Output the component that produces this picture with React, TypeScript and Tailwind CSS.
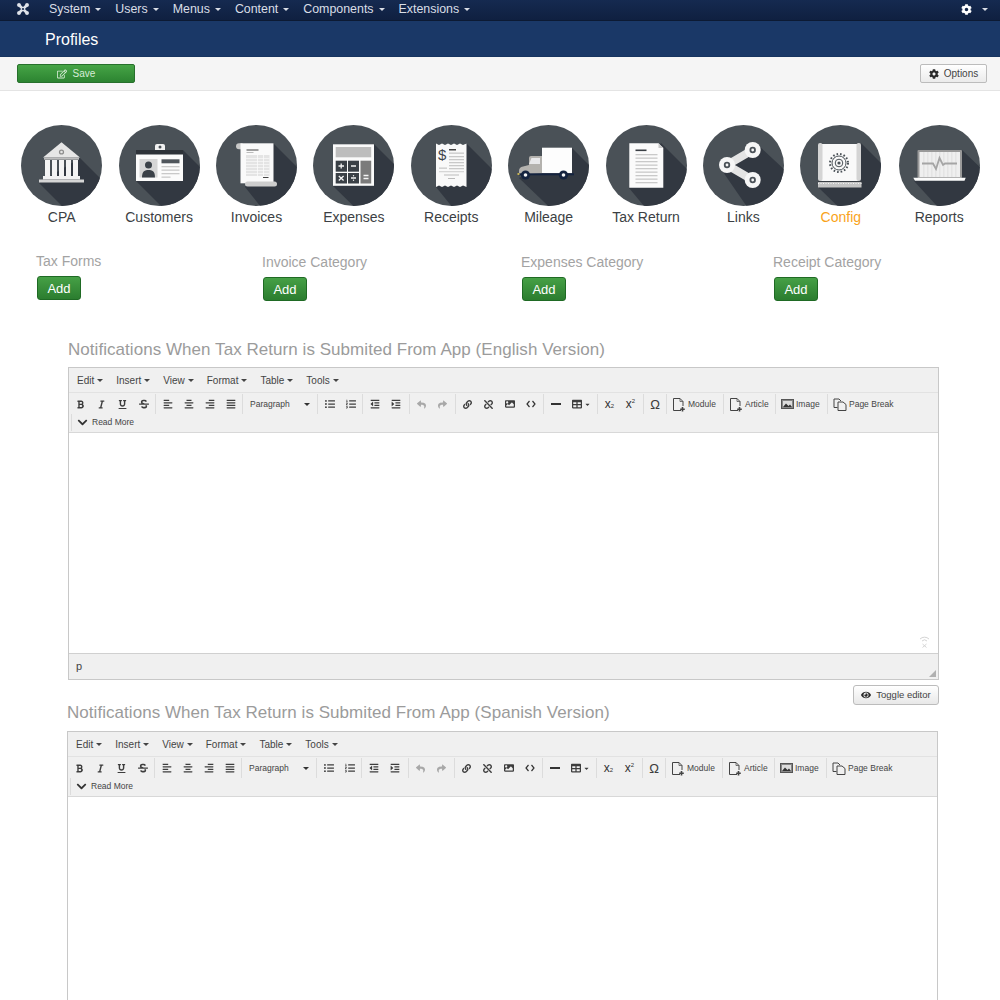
import React from "react";
import {
  FaAlignCenter,
  FaAlignJustify,
  FaAlignLeft,
  FaAlignRight,
  FaBold,
  FaCaretDown,
  FaChevronDown,
  FaCog,
  FaEye,
  FaImage,
  FaIndent,
  FaItalic,
  FaLink,
  FaListOl,
  FaListUl,
  FaOutdent,
  FaRegEdit,
  FaReply,
  FaShare,
  FaStrikethrough,
  FaTable,
  FaUnderline,
  FaUnlink,
} from "react-icons/fa";

const FONT = "font-['Liberation_Sans',Arial,sans-serif]";
const NAV = ["System", "Users", "Menus", "Content", "Components", "Extensions"];

const Caret = ({ className = "" }: { className?: string }) => (
  <span className={`inline-block h-0 w-0 border-x-[3px] border-t-[3px] border-x-transparent border-t-current ${className}`} />
);

const JoomlaLogo = () => (
  <svg width="14" height="14" viewBox="0 0 14 14" fill="none" stroke="#dfe3ea">
    <path d="M3.5 3.5 L10.5 10.5 M10.5 3.5 L3.5 10.5" strokeWidth="2.6" />
    <circle cx="3" cy="3" r="1.7" fill="#dfe3ea" strokeWidth="0.6" />
    <circle cx="11" cy="3" r="1.7" fill="#dfe3ea" strokeWidth="0.6" />
    <circle cx="3" cy="11" r="1.7" fill="#dfe3ea" strokeWidth="0.6" />
    <circle cx="11" cy="11" r="1.7" fill="#dfe3ea" strokeWidth="0.6" />
    <circle cx="7" cy="7" r="1.1" fill="#14284c" stroke="none" />
  </svg>
);

// Dark disc with a long shadow falling to the lower right
const Disc = ({ id, shadow, children }: { id: string; shadow: string; children: React.ReactNode }) => (
  <svg width="81" height="81" viewBox="0 0 81 81">
    <circle cx="40.5" cy="40.5" r="40.5" fill="#4a5157" />
    <clipPath id={id}>
      <circle cx="40.5" cy="40.5" r="40.5" />
    </clipPath>
    <polygon points={shadow} fill="#323841" clipPath={`url(#${id})`} />
    {children}
  </svg>
);

const Lines = ({ x, w, ys, color = "#c9c9c9" }: { x: number; w: number; ys: number[]; color?: string }) => (
  <>
    {ys.map((y) => (
      <rect key={y} x={x} y={y} width={w} height="1.3" fill={color} />
    ))}
  </>
);

const CpaIcon = () => (
  <Disc id="cpa" shadow="59,33 100,74 60,100 18,58">
    <polygon points="40.5,17.3 59,32.5 22,32.5" fill="#e6e6e6" />
    <circle cx="40.5" cy="27" r="2.6" fill="#8d8d8d" />
    <circle cx="40.5" cy="27" r="1.3" fill="#e6e6e6" />
    {[24, 31, 38, 45, 52].map((x) => (
      <rect key={x} x={x} y="35" width="5" height="16" fill="#f4f4f4" />
    ))}
    <rect x="23" y="32.5" width="35" height="2.2" fill="#bdbdbd" />
    <rect x="22" y="51" width="37" height="3.5" fill="#f2f2f2" />
    <rect x="18" y="54.5" width="45" height="3" fill="#d5d5d5" />
  </Disc>
);

const CustomersIcon = () => (
  <Disc id="customers" shadow="64,25 110,71 62,101 17,56">
    <rect x="36" y="19" width="10" height="8" rx="2" fill="#f2f2f2" />
    <circle cx="41" cy="22" r="1.5" fill="#4a5157" />
    <rect x="17" y="25" width="47" height="5" fill="#2d3238" />
    <rect x="17" y="29.5" width="47" height="26.5" fill="#fbfbfb" />
    <rect x="20.5" y="34" width="18" height="18.5" fill="#d6d6d6" />
    <circle cx="29.5" cy="40" r="3.5" fill="#3b4148" />
    <path d="M23 52.5 C23 46 26 45 29.5 45 C33 45 36 46 36 52.5 Z" fill="#3b4148" />
    <rect x="42.5" y="34.3" width="18" height="4" fill="#50565c" />
    <Lines x={42.5} w={18} ys={[41, 44.5, 48]} />
    <rect x="42.5" y="51.5" width="9" height="1.3" fill="#c9c9c9" />
  </Disc>
);

const InvoicesIcon = () => (
  <Disc id="invoices" shadow="57,18 100,61 60,101 29,62">
    <rect x="20" y="18.3" width="8" height="6" rx="3" fill="#c8c8c8" />
    <rect x="24.5" y="18.3" width="33" height="40" fill="#fafafa" />
    <rect x="29" y="56.5" width="32" height="5" rx="2.5" fill="#cdcdcd" />
    <rect x="30.5" y="24.5" width="12" height="1" fill="#444" />
    <rect x="30.5" y="27" width="7" height="1" fill="#bbb" />
    <rect x="30" y="30" width="23.5" height="21" fill="#e4e4e4" />
    {[33, 36, 39, 42, 45, 48].map((y) => (
      <rect key={y} x="30" y={y} width="23.5" height="0.7" fill="#fafafa" />
    ))}
    <rect x="41" y="30" width="0.8" height="21" fill="#fafafa" />
    <rect x="47" y="30" width="0.8" height="21" fill="#fafafa" />
    <rect x="47" y="52" width="5.5" height="1" fill="#444" />
  </Disc>
);

const ExpensesIcon = () => (
  <Disc id="expenses" shadow="61,19 105,63 64,104 20,61">
    <rect x="20" y="19.3" width="41" height="41.5" fill="#fafafa" />
    <rect x="22.7" y="22" width="35.5" height="10.3" fill="#bdbdbd" />
    <rect x="22.7" y="35.7" width="11.3" height="11" fill="#3a4046" />
    <rect x="35" y="35.7" width="11" height="11" fill="#3a4046" />
    <rect x="22.7" y="48" width="11.3" height="10.5" fill="#3a4046" />
    <rect x="35" y="48" width="11" height="10.5" fill="#3a4046" />
    <rect x="47.5" y="35.7" width="10.7" height="22.8" fill="#7b7b7b" />
    <path d="M25.5 41h5.5M28.2 38.5v5M38 41h5M25.8 51l4.8 4.5M30.6 51l-4.8 4.5M38 53h5M50.5 50.5h5M50.5 53.5h5" stroke="#f4f4f4" strokeWidth="1.3" />
    <circle cx="40.5" cy="50.7" r="0.7" fill="#f4f4f4" />
    <circle cx="40.5" cy="55.3" r="0.7" fill="#f4f4f4" />
  </Disc>
);

const ReceiptsIcon = () => (
  <Disc id="receipts" shadow="55,18 100,63 60,105 25,62">
    <polygon
      points="25,18.5 28,20 31,18.5 34,20 37,18.5 40,20 43,18.5 46,20 49,18.5 52,20 55.5,18.5 55.5,62 52,60.5 49,62 46,60.5 43,62 40,60.5 37,62 34,60.5 31,62 28,60.5 25,62"
      fill="#f9f9f9"
    />
    <text x="27" y="35" fontSize="15" fontFamily="Liberation Sans" fill="#3f454b">$</text>
    <rect x="38" y="24" width="7" height="1.5" fill="#444" />
    <Lines x={38} w={15} ys={[27.5, 31, 34, 37, 40]} />
    <Lines x={28} w={8} ys={[42.5]} />
    <Lines x={38} w={15} ys={[43]} />
    <Lines x={28} w={25} ys={[46]} color="#d6d6d6" />
    <rect x="33" y="49.5" width="15" height="1" fill="#bbb" />
    <rect x="37" y="53" width="7" height="1" fill="#bbb" />
  </Disc>
);

const MileageIcon = () => (
  <Disc id="mileage" shadow="64,23 110,69 60,100 11,53">
    <rect x="34" y="22.7" width="30" height="25.5" fill="#fdfdfd" />
    <path d="M21 48.3 V33 Q21 31 23 31 H34 V48.3 Z" fill="#b4b2ae" />
    <polygon points="23.5,33 32,33 32,39 21,39" fill="#e8e8ea" />
    <path d="M11 50 V46 Q11 42 15 41.5 L21 40 H34 V48.3 Z" fill="#b4b2ae" />
    <rect x="11" y="48.3" width="55" height="2" fill="#14233f" />
    <circle cx="17.5" cy="50" r="4.6" fill="#14233f" />
    <circle cx="17.5" cy="50" r="1.8" fill="#f4f4f4" />
    <circle cx="55.5" cy="50" r="4.6" fill="#14233f" />
    <circle cx="55.5" cy="50" r="1.8" fill="#f4f4f4" />
    <rect x="9.5" y="48" width="2" height="2" fill="#c8b452" />
  </Disc>
);

const TaxReturnIcon = () => (
  <Disc id="taxreturn" shadow="55,18 100,63 58,105 23,63">
    <polygon points="23.3,18.3 52.5,18.3 57.3,23 57.3,62.7 23.3,62.7" fill="#fbfbfb" />
    <polygon points="52.5,18.3 57.3,23 52.5,23" fill="#c8c8c8" />
    <rect x="29.5" y="24.5" width="11" height="1.6" fill="#3a3f45" />
    <Lines x={29.5} w={22} ys={[29, 32.5, 36, 39.5, 43, 46.5, 50, 53.5, 57]} />
  </Disc>
);

const LinksIcon = () => (
  <Disc id="links" shadow="55,20 100,62 60,105 18,44">
    <path d="M24 40 L49.7 25 M24 40 L49.7 55" stroke="#e4e4e4" strokeWidth="8" />
    {[[24, 40], [49.7, 25], [49.7, 55]].map(([x, y]) => (
      <g key={x + y}>
        <circle cx={x} cy={y} r="8" fill="#f6f6f6" />
        <circle cx={x} cy={y} r="3.2" fill="#4a5157" />
        <circle cx={x} cy={y} r="1.4" fill="#f6f6f6" />
      </g>
    ))}
  </Disc>
);

const ConfigIcon = () => (
  <Disc id="config" shadow="61,18 105,62 62,105 18,62">
    <rect x="21" y="19" width="37" height="37" fill="#f9f9f9" />
    <rect x="18" y="18" width="4.5" height="38" rx="2" fill="#d4d4d4" />
    <rect x="56.5" y="18" width="4.5" height="38" rx="2" fill="#d4d4d4" />
    <rect x="18" y="56" width="43.5" height="2.5" fill="#3a3f45" />
    <rect x="18" y="57" width="43.5" height="5.5" fill="#c4c4c4" />
    <path d="M18 58.5h43.5" stroke="#f4f4f4" strokeWidth="1" strokeDasharray="1 1.5" />
    <circle cx="39" cy="38" r="7" fill="none" stroke="#4a5157" strokeWidth="1" />
    <circle cx="39" cy="38" r="9" fill="none" stroke="#4a5157" strokeWidth="2" strokeDasharray="1.6 2" />
    <circle cx="39" cy="38" r="3.8" fill="none" stroke="#4a5157" strokeWidth="1" />
    <circle cx="39" cy="38" r="1.6" fill="#4a5157" />
  </Disc>
);

const ReportsIcon = () => (
  <Disc id="reports" shadow="63,25 105,65 60,105 15,56">
    <rect x="18.5" y="25" width="44.5" height="28" rx="1" fill="#9a9a9a" />
    <rect x="20.5" y="27" width="40.5" height="25" fill="#efefef" />
    {[24, 28, 32, 36, 40, 44, 48, 52, 56].map((x) => (
      <rect key={x} x={x} y="27" width="1.5" height="25" fill="#e4e4e4" />
    ))}
    <path d="M23 38.5 H34 L37 44 L40.5 33 L44 40 L46 38.5 H58" fill="none" stroke="#a5a5a5" strokeWidth="1.8" />
    <polygon points="14.3,52.7 66.7,52.7 65.5,55.7 16,55.7" fill="#fcfcfc" />
  </Disc>
);

const TILES = [
  { label: "CPA", icon: <CpaIcon /> },
  { label: "Customers", icon: <CustomersIcon /> },
  { label: "Invoices", icon: <InvoicesIcon /> },
  { label: "Expenses", icon: <ExpensesIcon /> },
  { label: "Receipts", icon: <ReceiptsIcon /> },
  { label: "Mileage", icon: <MileageIcon /> },
  { label: "Tax Return", icon: <TaxReturnIcon /> },
  { label: "Links", icon: <LinksIcon /> },
  { label: "Config", icon: <ConfigIcon /> },
  { label: "Reports", icon: <ReportsIcon /> },
];

const AddColumn = ({ label, className }: { label: string; className: string }) => (
  <div className={`flex flex-col items-start ${className}`}>
    <span className="h-4 text-sm leading-4 text-[#a3a3a3]">{label}</span>
    <button className="ml-px mt-[7px] h-6 w-11 rounded-[3px] border border-[#1f6a24] bg-gradient-to-b from-[#46a046] to-[#2b7d2f] text-[13px] leading-none text-white">
      Add
    </button>
  </div>
);

const DocPlusIcon = () => (
  <svg width="14" height="15" viewBox="0 0 14 15" fill="none" stroke="#444" strokeWidth="1">
    <path d="M9 13.5 H1.5 V1.5 H8 L11 4.5 V9" />
    <path d="M8 1.5 V4.5 H11" strokeWidth="0.7" />
    <path d="M10.5 10 V14.5 M8.2 12.2 H12.8" strokeWidth="1.6" />
  </svg>
);

const PicIcon = () => (
  <svg width="13" height="10" viewBox="0 0 13 10">
    <rect x="0.5" y="0.5" width="12" height="9" fill="#888" stroke="#555" />
    <rect x="2" y="2" width="9" height="6" fill="#ddd" />
    <path d="M2 8 L5 4.5 L7.5 7 L9 5.5 L11 8 Z" fill="#333" />
  </svg>
);

const PagesIcon = () => (
  <svg width="14" height="13" viewBox="0 0 14 13" fill="none" stroke="#444" strokeWidth="1">
    <path d="M4.5 9.5 H1 V1 H6 L8 3" />
    <path d="M5 4 H10 L13 6.5 V12.5 H5 Z" />
  </svg>
);

const CodeIcon = () => (
  <svg width="10" height="8" viewBox="0 0 10 8" fill="none" stroke="#333" strokeWidth="1.2">
    <path d="M3.5 1 L1 4 L3.5 7 M6.5 1 L9 4 L6.5 7" />
  </svg>
);

const Script = ({ digit, up = false }: { digit: string; up?: boolean }) => (
  <span className="flex items-baseline text-[12px] leading-none text-[#333]">
    x
    <span className={`text-[6px] leading-none ${up ? "-translate-y-[5px]" : ""}`}>{digit}</span>
  </span>
);

const Btn = ({ children, w = "w-[21px]" }: { children: React.ReactNode; w?: string }) => (
  <span className={`flex h-[20px] items-center justify-center text-[#3d3d3d] ${w}`}>{children}</span>
);

const Group = ({ children, first = false, ml = "ml-px" }: { children: React.ReactNode; first?: boolean; ml?: string }) => (
  <div className={`flex h-[20px] items-center ${first ? "pl-px" : `${ml} border-l border-[#dcdcdc] pl-px`}`}>{children}</div>
);

const TextBtn = ({ icon, label, className }: { icon: React.ReactNode; label: string; className: string }) => (
  <span className={`flex h-[20px] items-center gap-[2px] pl-[4px] text-[8.5px] text-[#444] ${className}`}>
    {icon}
    {label}
  </span>
);

const Editor = ({ className, cropped = false }: { className: string; cropped?: boolean }) => (
  <div className={`w-[871px] border border-[#c8c8c8] bg-white ${className}`}>
    <div className="flex h-[25px] items-center gap-[13px] border-b border-[#e2e2e2] bg-[#f0f0f0] pl-2 text-[10px] text-[#444]">
      {["Edit", "Insert", "View", "Format", "Table", "Tools"].map((m) => (
        <span key={m} className="flex items-center gap-[3px]">
          {m}
          <Caret />
        </span>
      ))}
    </div>
    <div className="h-10 border-b border-[#d8d8d8] bg-[#f0f0f0]">
      <div className="flex h-[21px] items-center pt-px">
        <Group first>
          <Btn><FaBold size={9} /></Btn>
          <Btn><FaItalic size={9} /></Btn>
          <Btn><FaUnderline size={9} /></Btn>
          <Btn><FaStrikethrough size={10} /></Btn>
        </Group>
        <Group>
          <Btn><FaAlignLeft size={10} /></Btn>
          <Btn><FaAlignCenter size={10} /></Btn>
          <Btn><FaAlignRight size={10} /></Btn>
          <Btn><FaAlignJustify size={10} /></Btn>
        </Group>
        <Group>
          <span className="flex w-[72px] items-center justify-between px-[6px] text-[8.5px] text-[#444]">
            Paragraph
            <Caret className="text-[#333]" />
          </span>
        </Group>
        <Group>
          <Btn><FaListUl size={10} /></Btn>
          <Btn><FaListOl size={10} /></Btn>
        </Group>
        <Group>
          <Btn><FaOutdent size={10} /></Btn>
          <Btn><FaIndent size={10} /></Btn>
        </Group>
        <Group ml="ml-[3px]">
          <Btn><FaReply size={9} className="text-[#a8a8a8]" /></Btn>
          <Btn><FaShare size={9} className="text-[#a8a8a8]" /></Btn>
        </Group>
        <Group ml="ml-[2px]">
          <Btn><FaLink size={9} /></Btn>
          <Btn><FaUnlink size={9} /></Btn>
          <Btn><FaImage size={10} /></Btn>
          <Btn><CodeIcon /></Btn>
        </Group>
        <Group ml="ml-[2px]">
          <Btn w="w-[22px]"><span className="h-[2px] w-[10px] bg-[#333]" /></Btn>
          <Btn w="w-[29px] gap-[2px]"><FaTable size={10} /><FaCaretDown size={7} /></Btn>
        </Group>
        <Group>
          <Btn><Script digit="2" /></Btn>
          <Btn><Script digit="2" up /></Btn>
        </Group>
        <Group ml="ml-[2px]">
          <Btn w="w-5"><span className="text-[13px] leading-none">Ω</span></Btn>
        </Group>
        <Group>
          <TextBtn className="w-[54px]" icon={<DocPlusIcon />} label="Module" />
        </Group>
        <Group>
          <TextBtn className="w-[49px]" icon={<DocPlusIcon />} label="Article" />
        </Group>
        <Group>
          <TextBtn className="w-[49px]" icon={<PicIcon />} label="Image" />
        </Group>
        <Group>
          <TextBtn className="w-[66px]" icon={<PagesIcon />} label="Page Break" />
        </Group>
      </div>
      <div className="flex h-[17px] items-center pl-[2px]">
        <div className="flex h-[17px] items-center border-l border-[#dcdcdc] pl-[5px]">
          <FaChevronDown size={11} className="text-[#333]" />
          <span className="ml-[4px] text-[8.5px] text-[#444]">Read More</span>
        </div>
      </div>
    </div>
    {/* The second editor runs past the bottom of the page, so it has no status bar here */}
    {cropped ? (
      <div className="h-[220px]" />
    ) : (
      <>
        <div className="flex h-[220px] items-end justify-end pb-[5px] pr-[8px]">
          <svg width="11" height="13" viewBox="0 0 11 13" fill="none" stroke="#d4d4d4" strokeWidth="1">
            <path d="M1 4 A6.5 6.5 0 0 1 10 4 M3 6 A3.5 3.5 0 0 1 8 6 M3.5 9 L7.5 12.5 M7.5 9 L3.5 12.5" />
          </svg>
        </div>
        <div className="flex h-[26px] items-center justify-between border-t border-[#d0d0d0] bg-[#f0f0f0] pl-[7px] pr-px text-[11px] text-[#444]">
          p
          <svg width="9" height="9" viewBox="0 0 9 9" className="mt-[13px]">
            <polygon points="8,1 8,8 1,8" fill="#b0b0b0" />
          </svg>
        </div>
      </>
    )}
  </div>
);

export default function App() {
  return (
    <div className={`h-[1000px] overflow-hidden bg-white ${FONT}`}>
      {/* Top menu */}
      <div className="flex h-[21px] items-center justify-between border-b border-[#0c1a33] bg-gradient-to-b from-[#152a50] to-[#0f2040] pb-[2px] pl-[16px] pr-[12px] text-[#d9dee6]">
        <div className="flex items-center">
          <JoomlaLogo />
          <div className="ml-[19px] flex gap-[14px] text-[12.4px]">
            {NAV.map((n) => (
              <span key={n} className="flex items-center gap-[5px]">
                {n}
                <Caret />
              </span>
            ))}
          </div>
        </div>
        <div className="flex items-center gap-[6px]">
          <FaCog size={11} className="text-white" />
          <Caret className="ml-[4px]" />
        </div>
      </div>
      {/* Title bar */}
      <div className="flex h-9 items-center border-b border-[#17345f] bg-[#1a3867] pl-[45px] pt-[2px] text-base text-white">Profiles</div>
      {/* Action bar */}
      <div className="flex h-[34px] items-center justify-between border-b border-[#e4e4e4] bg-[#f5f5f5] pl-[17px] pr-[13px]">
        <button className="flex h-[19px] w-[118px] items-center justify-center gap-[6px] rounded-[2px] border border-[#27702c] bg-gradient-to-b from-[#46a446] to-[#2c8431] text-[10px] text-[#d6ebd6]">
          <FaRegEdit size={10} />
          Save
        </button>
        <button className="flex h-[19px] w-[67px] items-center justify-center gap-[5px] rounded-[2px] border border-[#bcbcbc] bg-gradient-to-b from-white to-[#ebebeb] text-[10px] text-[#444]">
          <FaCog size={10} className="text-[#2b2b2b]" />
          Options
        </button>
      </div>
      {/* Icon tiles */}
      <div className="flex pl-[13px] pt-[34px]">
        {TILES.map((t) => (
          <div key={t.label} className="flex w-[97.4px] flex-col items-center last:ml-px">
            <div className="h-[81px]">{t.icon}</div>
            <span className={`mt-[3px] text-sm leading-4 ${t.label === "Config" ? "text-[#f9a31a]" : "text-[#3c3f44]"}`}>{t.label}</span>
          </div>
        ))}
      </div>
      {/* Category shortcuts */}
      <div className="mt-7 flex items-start pl-[36px]">
        <AddColumn label="Tax Forms" className="w-[226px]" />
        <AddColumn label="Invoice Category" className="mt-px w-[259px]" />
        <AddColumn label="Expenses Category" className="mt-px w-[252px]" />
        <AddColumn label="Receipt Category" className="mt-px" />
      </div>
      {/* Notification editors */}
      <h2 className="ml-[68px] mt-[39px] h-5 text-[17px] leading-5 tracking-[0.05px] text-[#9b9b9b]">
        Notifications When Tax Return is Submited From App (English Version)
      </h2>
      <Editor className="ml-[68px] mt-[7px]" />
      <div className="ml-[68px] mt-[5px] flex w-[871px] justify-end">
        <button className="flex h-5 w-[86px] items-center justify-center gap-[5px] rounded-[3px] border border-[#bcbcbc] bg-gradient-to-b from-white to-[#e8e8e8] text-[9.5px] text-[#444]">
          <FaEye size={10} className="text-[#2b2b2b]" />
          Toggle editor
        </button>
      </div>
      <h2 className="ml-[67px] mt-[-2px] h-5 text-[17px] leading-5 tracking-[0.05px] text-[#9b9b9b]">
        Notifications When Tax Return is Submited From App (Spanish Version)
      </h2>
      <Editor className="ml-[67px] mt-2" cropped />
    </div>
  );
}
